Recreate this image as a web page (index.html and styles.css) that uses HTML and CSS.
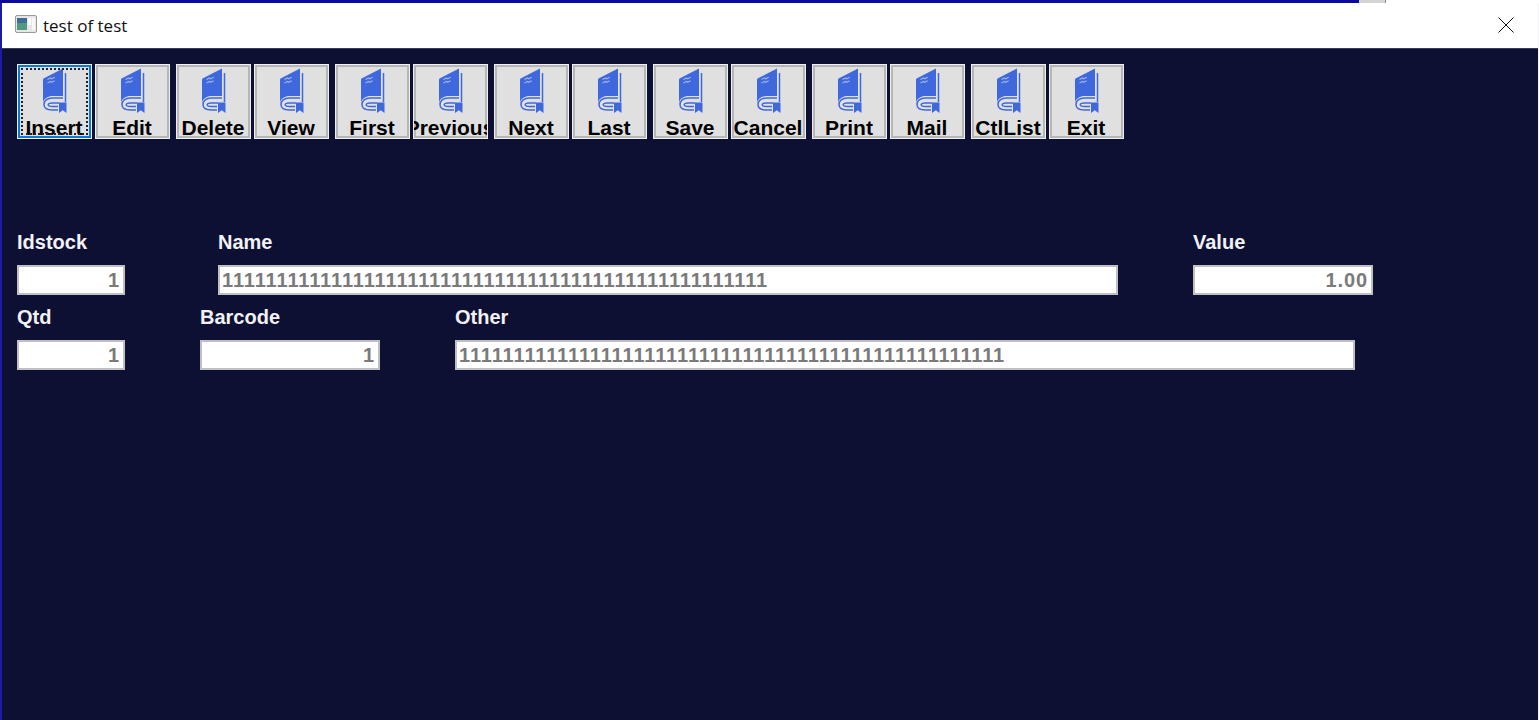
FILE: index.html
```html
<!DOCTYPE html>
<html lang="en">
<head>
<meta charset="utf-8">
<title>test of test</title>
<link rel="stylesheet" href="styles.css">
</head>
<body>
<svg class="defs" width="0" height="0" aria-hidden="true">
  <symbol id="book" viewBox="0 0 25 45">
    <path fill="#3f68dc" d="M2.500 10 21 .5V28H10.500C6 28 2.500 30.500 1 34V12c0-1 .5-1.600 1.500-2Z"/>
    <path fill="none" stroke="#9db2ee" stroke-width="1.100" d="M5.500 11.500l3-1.500 1.200.8 3-1.500M5.500 15l3-1.500 1.200.8 3-1.500"/>
    <path fill="none" stroke="#3f68dc" stroke-width="1.500" d="M23.500 5v29M21 30H10.500C5 30 2 33 2 36.500S5 42 10.500 42H16M17 35H10.500C7.500 35 6.200 35.800 6.200 36.800S7.500 38.500 10.500 38.500H16"/>
    <path fill="#3f68dc" d="M17 34.500h7.500V45l-3.700-2.800L17 45Z"/>
  </symbol>
</svg>
<div class="window">
  <div class="topstrip"></div>
  <header class="titlebar">
    <svg class="app-icon" width="22" height="18" viewBox="0 0 22 18" aria-hidden="true">
      <rect x=".5" y=".5" width="21" height="17" rx="1.500" fill="#e6e6e6" stroke="#9a9a9a"/>
      <rect x="2" y="3" width="10" height="12" fill="#4f9a80"/>
      <rect x="2" y="3" width="10" height="5" fill="#3c6f96"/>
      <rect x="13" y="3" width="3" height="7" fill="#fff"/>
      <rect x="17" y="3" width="3" height="12" fill="#f7f7f7"/>
    </svg>
    <span class="title">test of test</span>
    <svg class="close" width="16" height="16" viewBox="0 0 16 16" aria-hidden="true">
      <path d="M.5.500l15 15M15.500.500l-15 15" stroke="#111" stroke-width="1" fill="none"/>
    </svg>
  </header>
  <main class="content">
    <nav class="toolbar">
      <div class="group">
        <button class="tool focused"><svg class="book"><use href="#book"/></svg><span>Insert</span></button>
        <button class="tool"><svg class="book"><use href="#book"/></svg><span>Edit</span></button>
      </div>
      <div class="group">
        <button class="tool"><svg class="book"><use href="#book"/></svg><span>Delete</span></button>
        <button class="tool"><svg class="book"><use href="#book"/></svg><span>View</span></button>
      </div>
      <div class="group">
        <button class="tool"><svg class="book"><use href="#book"/></svg><span>First</span></button>
        <button class="tool"><svg class="book"><use href="#book"/></svg><span>Previous</span></button>
      </div>
      <div class="group">
        <button class="tool"><svg class="book"><use href="#book"/></svg><span>Next</span></button>
        <button class="tool"><svg class="book"><use href="#book"/></svg><span>Last</span></button>
      </div>
      <div class="group">
        <button class="tool"><svg class="book"><use href="#book"/></svg><span>Save</span></button>
        <button class="tool"><svg class="book"><use href="#book"/></svg><span>Cancel</span></button>
      </div>
      <div class="group">
        <button class="tool"><svg class="book"><use href="#book"/></svg><span>Print</span></button>
        <button class="tool"><svg class="book"><use href="#book"/></svg><span>Mail</span></button>
      </div>
      <div class="group">
        <button class="tool"><svg class="book"><use href="#book"/></svg><span>CtlList</span></button>
        <button class="tool"><svg class="book"><use href="#book"/></svg><span>Exit</span></button>
      </div>
    </nav>
    <form class="form">
      <div class="row row-first">
        <label class="field w108"><span class="label">Idstock</span><span class="input num">1</span></label>
        <label class="field w900"><span class="label">Name</span><span class="input">11111111111111111111111111111111111111111111111111</span></label>
        <label class="field w180"><span class="label">Value</span><span class="input num">1.00</span></label>
      </div>
      <div class="row">
        <label class="field w108"><span class="label">Qtd</span><span class="input num">1</span></label>
        <label class="field w180"><span class="label">Barcode</span><span class="input num">1</span></label>
        <label class="field w900"><span class="label">Other</span><span class="input">11111111111111111111111111111111111111111111111111</span></label>
      </div>
    </form>
  </main>
</div>
</body>
</html>
```
FILE: styles.css
```css
* { box-sizing: border-box; }
html, body { margin: 0; height: 100%; overflow: hidden; }
body { background: #0d1033; font-family: "Liberation Sans", Arial, sans-serif; }
.defs { position: absolute; }
.window {
  height: 720px;
  display: flex;
  flex-direction: column;
  border-left: 2px solid #1a1aa6;
  border-right: 1px solid #f4f4f6;
}
.topstrip {
  height: 3px;
  flex: none;
  margin-left: -2px;
  margin-right: -1px;
  background: linear-gradient(to right, #0a0a9e 0, #0a0a9e 1359px, #d4d4d4 1359px, #d4d4d4 1385px, #8a8a8a 1385px, #8a8a8a 1386px, #fff 1386px);
}
.titlebar {
  height: 46px;
  flex: none;
  background: #fff;
  display: flex;
  align-items: center;
  padding: 0 24px 0 13px;
  border-bottom: 1px solid #3a3c5c;
}
.app-icon { margin-right: 6px; margin-top: -3px; }
.title { font-family: "Open Sans", sans-serif; font-size: 17px; color: #111; flex: 1; margin-top: -1px; }
.close { margin-top: -2px; }
.content { flex: 1; padding: 15px 0 0 15px; }
.toolbar { display: flex; gap: 6px; }
.group { display: flex; gap: 3px; }
.tool {
  width: 75px;
  height: 75px;
  padding: 3px 1px 0 0;
  background: #e0e0e0;
  border: 1px solid #f0f0f0;
  box-shadow: inset 0 0 0 2px #b6b6b6;
  display: flex;
  flex-direction: column;
  align-items: center;
  font: bold 21px/1 "Liberation Sans", Arial, sans-serif;
  color: #000;
  overflow: hidden;
  white-space: nowrap;
}
.tool span { margin-top: 4px; }
.book { width: 25px; height: 45px; flex: none; }
.focused { box-shadow: inset 0 0 0 2px #0a78d6; outline: 2px dotted #222; outline-offset: -6px; }
.form { margin-top: 91px; display: flex; flex-direction: column; gap: 10px; }
.row { display: flex; gap: 75px; }
.row-first { gap: 93px; }
.row-first .w900 { margin-right: -18px; }
.field { display: flex; flex-direction: column; gap: 11px; }
.label { height: 24px; font-size: 20px; font-weight: bold; line-height: 24px; color: #f2f2f6; white-space: nowrap; }
.input {
  height: 30px;
  background: #fff;
  border: 2px solid #c0c0c4;
  font-size: 20px;
  font-weight: bold;
  line-height: 26px;
  padding: 0 3px 0 2px;
  color: #7a7a7a;
  letter-spacing: .88px;
  white-space: nowrap;
  overflow: hidden;
}
.num { text-align: right; }
.w108 { width: 108px; }
.w180 { width: 180px; }
.w900 { width: 900px; }
```
